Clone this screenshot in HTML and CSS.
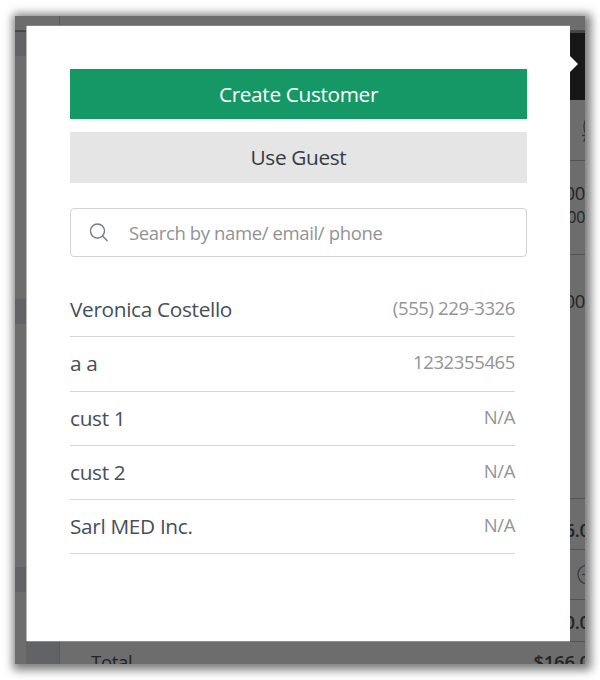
FILE: index.html
```html
<!DOCTYPE html>
<html lang="en">
<head>
<meta charset="utf-8">
<title>Customers</title>
<link rel="stylesheet" href="styles.css">
</head>
<body>
<div class="frame">
  <div class="page">
    <div class="rail">
      <div class="rail-top"></div><div class="rail-active"></div>
      <div class="rail-gap"></div><div class="rail-band"></div>
      <div class="rail-gap"></div><div class="rail-band"></div>
    </div>
    <div class="side"></div>
    <div class="cart">
      <div class="cart-top"></div>
      <div class="cart-head"></div>
      <div class="row tools"><svg class="cart-icon" width="18" height="28" viewBox="0 0 18 28" fill="none" stroke="#34343b" stroke-width="1.3"><path d="M6 1C2.500 4 2 13 5 17M1 18.500h12M3 25c0-3 1-4 3-5"/><path d="M5 4v10" stroke="#394768"/></svg></div>
      <div class="row item"><span class="price">$59.00</span><span class="old">$59.00</span></div>
      <div class="row space"><span class="price">$59.00</span></div>
      <div class="row subtotal"><b>$166.00</b></div>
      <div class="row discount"><svg width="21" height="21" viewBox="0 0 21 21" fill="none" stroke="#3b3c43" stroke-width="1.3"><circle cx="10.500" cy="10.500" r="9.500"/><path d="M5 10.500h11"/></svg></div>
      <div class="row tax"><b>$0.00</b></div>
      <div class="row total"><span>Total</span><b>$166.00</b></div>
    </div>
  </div>
  <div class="modal">
    <button class="btn create">Create Customer</button>
    <button class="btn guest">Use Guest</button>
    <div class="search">
      <svg width="20" height="20" viewBox="0 0 20 20" fill="none" stroke="#77798b" stroke-width="1.400"><circle cx="7.500" cy="8" r="7"/><path d="M12.500 13l5 5"/></svg>
      <span>Search by name/ email/ phone</span>
    </div>
    <ul class="list">
      <li><span class="name">Veronica Costello</span><span class="phone">(555) 229-3326</span></li>
      <li><span class="name">a a</span><span class="phone">1232355465</span></li>
      <li><span class="name">cust 1</span><span class="phone">N/A</span></li>
      <li><span class="name">cust 2</span><span class="phone">N/A</span></li>
      <li><span class="name">Sarl MED Inc.</span><span class="phone">N/A</span></li>
    </ul>
  </div>
</div>
</body>
</html>
```
FILE: styles.css
```css
* { box-sizing: border-box; }
body {
  margin: 0;
  padding: 16px 15px;
  height: 680px;
  overflow: hidden;
  background: #fff;
  font-family: "Open Sans", "Noto Sans", sans-serif;
}
.frame {
  position: relative;
  width: 570px;
  height: 648px;
  box-shadow: 2px 2px 9px 4px rgba(0, 0, 0, .52);
}
.page {
  display: flex;
  width: 570px;
  height: 648px;
  overflow: hidden;
  background: #6d6d6d;
}
.rail { width: 11px; flex: none; }
.rail-top { height: 16px; border-bottom: 2px solid #47474d; }
.rail-active { height: 24px; background: #616366; }
.rail-gap { height: 243px; }
.rail-band { height: 25px; background: #616366; }
.side {
  width: 34px;
  flex: none;
  background: linear-gradient(#6d6d6d 16px, #616366 16px);
  border-right: 1px solid #5a5a5a;
}
.cart { flex: none; width: 525px; }
.cart-top { height: 17px; border-bottom: 3px solid #47474d; }
.cart-head {
  height: 67px;
  background: #171717;
}
.row {
  display: flex;
  margin-left: 31px;
  color: #222426;
  font-size: 18.5px;
  letter-spacing: -.3px;
  line-height: 24px;
  white-space: nowrap;
  border-bottom: 1px solid #545454;
}
.tools { height: 61px; justify-content: flex-end; padding-top: 17px; }
.cart-icon { flex: none; margin-right: -14px; }
.item { height: 94px; flex-direction: column; align-items: flex-end; padding-top: 20px; }
.old { font-size: 16px; }
.space { height: 244px; justify-content: flex-end; padding-top: 34px; }
.subtotal { height: 51px; justify-content: flex-end; padding-top: 19px; }
.discount { height: 50px; justify-content: flex-end; align-items: center; }
.discount svg { flex: none; margin-right: -13px; }
.tax { height: 42px; justify-content: flex-end; padding-top: 10px; }
.total { height: 40px; justify-content: space-between; padding-top: 8px; border: 0; }
.row b { font-weight: 600; margin-right: -15px; }
.modal {
  position: absolute;
  left: 12px;
  top: 10px;
  width: 543px;
  height: 615px;
  padding: 43px 43px 0;
  background: #fff;
  box-shadow: -1px 0 0 #b5b5b5, 0 1px 0 #8c8c8c, 0 -1px 0 #848484;
}
.modal::after {
  content: "";
  position: absolute;
  left: 543px;
  top: 30px;
  border: 8px solid transparent;
  border-left-color: #fff;
  border-right: 0;
}
.btn {
  display: block;
  width: 457px;
  height: 50px;
  padding: 0 0 1px;
  border: 0;
  font: 20.8px "Open Sans", "Noto Sans", sans-serif;
  letter-spacing: -.35px;
}
.create { background: #169866; color: #fff; }
.guest { margin-top: 13px; background: #e5e5e5; color: #323b43; height: 51px; }
.search {
  display: flex;
  align-items: center;
  width: 457px;
  height: 49px;
  margin-top: 25px;
  padding-left: 19px;
  border: 1px solid #d3d3d3;
  border-radius: 4px;
  color: #929292;
  font-size: 18.5px;
  letter-spacing: -.37px;
}
.search span { margin-left: 19px; }
.list {
  width: 445px;
  margin: 26px 0 0;
  padding: 0;
  list-style: none;
}
.list li {
  display: flex;
  justify-content: space-between;
  height: 54.3px;
  padding-top: 11px;
  border-bottom: 1px solid #d6d6d6;
}
.name { color: #454f58; font-size: 20.8px; line-height: 30px; letter-spacing: -.33px; }
.phone { color: #929496; font-size: 18.5px; line-height: 27px; letter-spacing: -.38px; }
```
